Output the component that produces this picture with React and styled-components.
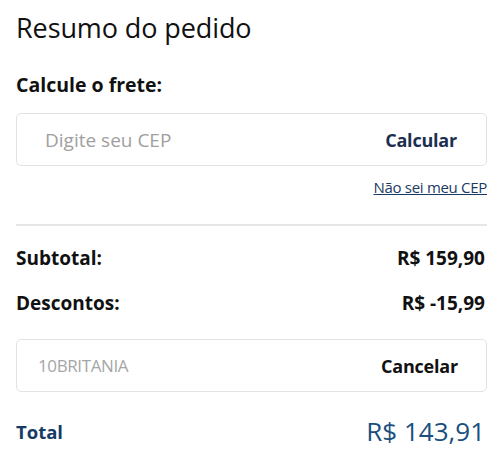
import React from "react";
import styled, { createGlobalStyle } from "styled-components";

const GlobalStyle = createGlobalStyle`
  body {
    margin: 0;
    background: #fff;
    font-family: "Open Sans", "Noto Sans", sans-serif;
    color: #111;
  }
`;

export default function App() {
  return (
    <>
      <GlobalStyle />
      <Summary>
        <Title>Resumo do pedido</Title>
        <Label>Calcule o frete:</Label>
        <FieldBox>
          <Placeholder>Digite seu CEP</Placeholder>
          <Action color="#1b2f50">Calcular</Action>
        </FieldBox>
        <HelpLink href="#">Não sei meu CEP</HelpLink>
        <Divider />
        <Row>
          <RowLabel>Subtotal:</RowLabel>
          <RowValue>R$ 159,90</RowValue>
        </Row>
        <Row>
          <RowLabel>Descontos:</RowLabel>
          <RowValue>R$ -15,99</RowValue>
        </Row>
        <FieldBox coupon>
          <Placeholder coupon>10BRITANIA</Placeholder>
          <Action color="#111">Cancelar</Action>
        </FieldBox>
        <TotalRow>
          <TotalLabel>Total</TotalLabel>
          <TotalValue>R$ 143,91</TotalValue>
        </TotalRow>
      </Summary>
    </>
  );
}

const Summary = styled.div`
  width: 471px;
  padding: 10px 13px 0 16px;
  display: flex;
  flex-direction: column;
`;

const Title = styled.h1`
  margin: 0;
  font-size: 27px;
  font-weight: 400;
  line-height: 36px;
  color: #111;
  letter-spacing: -0.1px;
`;

const Label = styled.div`
  margin-top: 27px;
  font-size: 19.5px;
  font-weight: 700;
  line-height: 24px;
`;

const FieldBox = styled.div`
  margin-top: ${(p) => (p.coupon ? "23px" : "16px")};
  height: 53px;
  box-sizing: border-box;
  border: 1px solid #e3e3e3;
  border-radius: 5px;
  display: flex;
  align-items: center;
  justify-content: space-between;
  padding: 0 ${(p) => (p.coupon ? "28px" : "29px")} 0 ${(p) => (p.coupon ? "21px" : "28px")};
`;

const Placeholder = styled.span`
  font-size: ${(p) => (p.coupon ? "17px" : "19px")};
  color: ${(p) => (p.coupon ? "#a6a6a6" : "#a0a0a0")};
  letter-spacing: ${(p) => (p.coupon ? "-0.4px" : "0")};
`;

const Action = styled.span`
  font-size: 18px;
  font-weight: 700;
  color: ${(p) => p.color};
  letter-spacing: -0.2px;
`;

const HelpLink = styled.a`
  align-self: flex-end;
  margin-top: 12px;
  font-size: 15px;
  line-height: 19px;
  color: #1b3a63;
  text-decoration: underline;
  letter-spacing: -0.3px;
`;

const Divider = styled.hr`
  margin: 27px 0 0;
  border: none;
  border-top: 2px solid #e6e6e6;
`;

const Row = styled.div`
  display: flex;
  justify-content: space-between;
  align-items: center;
  margin-top: 19px;
  height: 26px;
  font-size: 19px;
  font-weight: 700;
  &:first-of-type {
    margin-top: 24px;
  }
`;

const RowLabel = styled.span``;

const RowValue = styled.span`
  padding-right: 2px;
`;

const TotalRow = styled.div`
  margin-top: 21px;
  height: 36px;
  display: flex;
  justify-content: space-between;
  align-items: center;
`;

const TotalLabel = styled.span`
  font-size: 18.5px;
  font-weight: 700;
  color: #163b66;
`;

const TotalValue = styled.span`
  font-size: 26px;
  color: #1a4f80;
  padding-right: 2px;
`;
